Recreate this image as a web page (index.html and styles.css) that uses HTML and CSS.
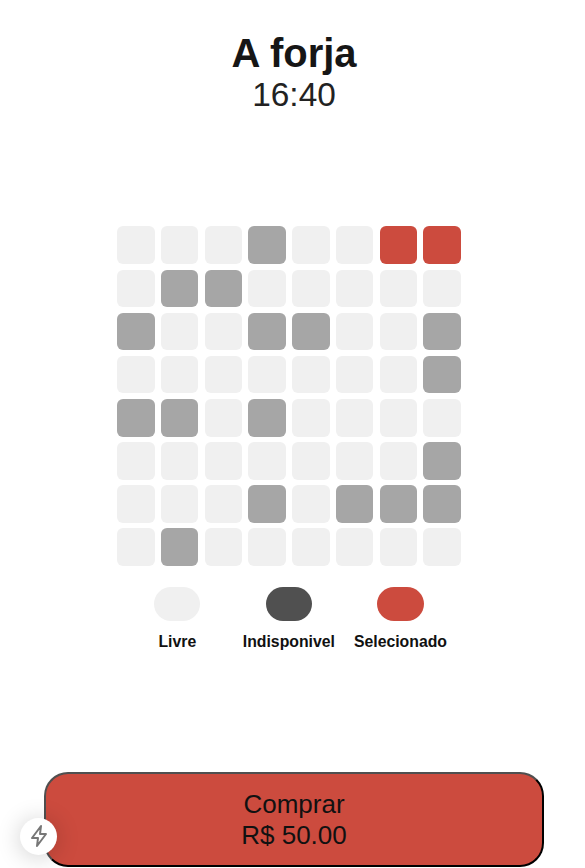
FILE: index.html
```html
<!DOCTYPE html>
<html lang="pt">
<head>
<meta charset="utf-8">
<title>A forja</title>
<link rel="stylesheet" href="styles.css">
</head>
<body>
<main class="page">
  <header class="head">
    <h1 class="title">A forja</h1>
    <p class="time">16:40</p>
  </header>
  <section class="seats">
    <div class="grid">
      <i class="s"></i><i class="s"></i><i class="s"></i><i class="s u"></i><i class="s"></i><i class="s"></i><i class="s r"></i><i class="s r"></i>
      <i class="s"></i><i class="s u"></i><i class="s u"></i><i class="s"></i><i class="s"></i><i class="s"></i><i class="s"></i><i class="s"></i>
      <i class="s u"></i><i class="s"></i><i class="s"></i><i class="s u"></i><i class="s u"></i><i class="s"></i><i class="s"></i><i class="s u"></i>
      <i class="s"></i><i class="s"></i><i class="s"></i><i class="s"></i><i class="s"></i><i class="s"></i><i class="s"></i><i class="s u"></i>
      <i class="s u"></i><i class="s u"></i><i class="s"></i><i class="s u"></i><i class="s"></i><i class="s"></i><i class="s"></i><i class="s"></i>
      <i class="s"></i><i class="s"></i><i class="s"></i><i class="s"></i><i class="s"></i><i class="s"></i><i class="s"></i><i class="s u"></i>
      <i class="s"></i><i class="s"></i><i class="s"></i><i class="s u"></i><i class="s"></i><i class="s u"></i><i class="s u"></i><i class="s u"></i>
      <i class="s"></i><i class="s u"></i><i class="s"></i><i class="s"></i><i class="s"></i><i class="s"></i><i class="s"></i><i class="s"></i>
    </div>
    <div class="legend">
      <div class="item"><span class="pill free"></span><span class="label">Livre</span></div>
      <div class="item"><span class="pill off"></span><span class="label">Indisponivel</span></div>
      <div class="item"><span class="pill sel"></span><span class="label">Selecionado</span></div>
    </div>
  </section>
  <button class="buy" type="button">Comprar<br>R$ 50.00</button>
</main>
<div class="badge">
  <svg width="24" height="24" viewBox="0 0 24 24" fill="none" stroke="#777" stroke-width="2" stroke-linejoin="round" stroke-linecap="round"><path d="M14 2 5 14h6l-1 8 9-12h-6l1-8z"/></svg>
</div>
</body>
</html>
```

FILE: styles.css
```css
* { box-sizing: border-box; }
html, body { margin: 0; padding: 0; background: #fff; }
body {
  height: 868px;
  overflow: hidden;
  font-family: "Liberation Sans", Arial, sans-serif;
  color: #111;
}
.page {
  height: 868px;
  display: flex;
  flex-direction: column;
  align-items: stretch;
}
.head {
  padding-top: 31px;
  padding-left: 3px;
  text-align: center;
  height: 226.4px;
}
.title {
  margin: 0;
  font-size: 40px;
  line-height: 45px;
  font-weight: 700;
  color: #161616;
}
.time {
  margin: 0;
  font-size: 33.4px;
  line-height: 38px;
  color: #222;
}
.seats {
  width: 343.4px;
  margin-left: 117.35px;
  display: flex;
  flex-direction: column;
}
.grid {
  display: grid;
  grid-template-columns: repeat(8, 37.4px);
  grid-auto-rows: 37.6px;
  column-gap: 6.32px;
  row-gap: 5.55px;
}
.s { display: block; background: #f0f0f0; border-radius: 6px; }
.s.u { background: #a6a6a6; }
.s.r { background: #cc4b3e; }
.legend {
  display: grid;
  grid-template-columns: repeat(3, 111.6px);
  justify-content: center;
  margin-top: 21.4px;
  padding-right: 0.3px;
}
.item {
  display: flex;
  flex-direction: column;
  align-items: center;
  gap: 12px;
}
.pill { display: block; width: 46.2px; height: 34px; border-radius: 17px; }
.free { background: #f0f0f0; }
.off { background: #505050; }
.sel { background: #cc4b3e; }
.label {
  font-size: 15.8px;
  line-height: 18px;
  font-weight: 700;
  white-space: nowrap;
  color: #111;
}
.buy {
  margin: auto 0 1px 44px;
  width: 500px;
  height: 95px;
  padding: 0;
  background: #cc4b3e;
  border: 2px solid;
  border-color: #4f4f4f #000 #000 #4f4f4f;
  border-radius: 24px;
  font-family: inherit;
  font-size: 26px;
  line-height: 31px;
  color: #111;
}
.badge {
  position: absolute;
  left: 20px;
  top: 817.5px;
  width: 37px;
  height: 37px;
  border-radius: 50%;
  background: #fff;
  box-shadow: 0 2px 24px rgba(0, 0, 0, 0.2);
  display: flex;
  align-items: center;
  justify-content: center;
}
```
